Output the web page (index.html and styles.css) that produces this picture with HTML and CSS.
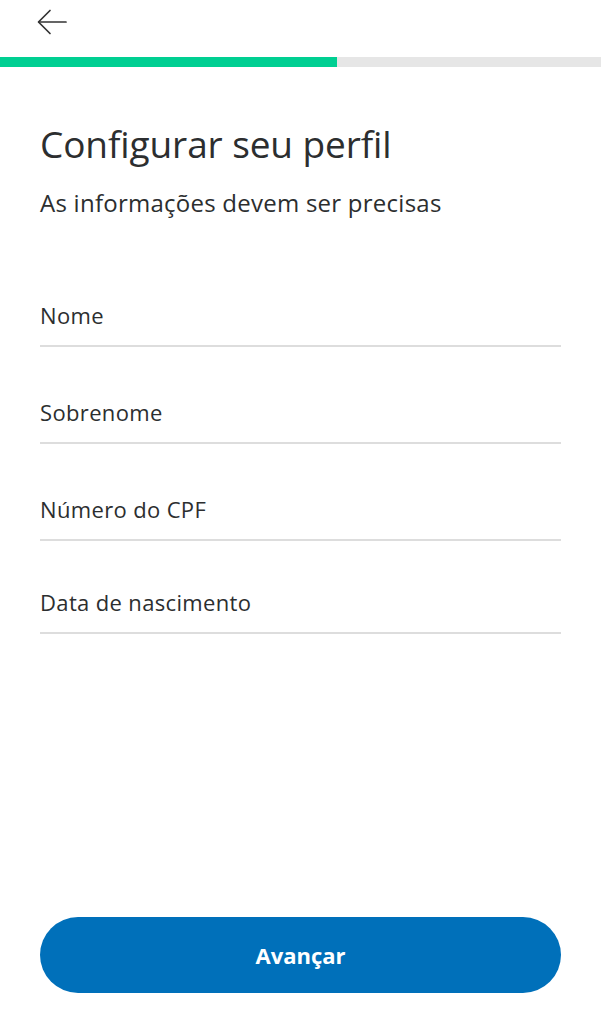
FILE: index.html
```html
<!DOCTYPE html>
<html lang="pt-BR">
<head>
<meta charset="utf-8">
<title>Configurar seu perfil</title>
<link rel="stylesheet" href="styles.css">
</head>
<body>
<div class="page">
  <header class="topbar">
    <button class="back" aria-label="Voltar">
      <svg width="30" height="26" viewBox="0 0 30 26" fill="none" stroke="#333" stroke-width="1.7" stroke-linecap="round" stroke-linejoin="round">
        <path d="M29 13H2"/>
        <path d="M13 1.5L1.5 13L13 24.5"/>
      </svg>
    </button>
  </header>
  <div class="progress"><div class="progress-fill"></div></div>
  <main class="content">
    <h1 class="title">Configurar seu perfil</h1>
    <p class="subtitle">As informações devem ser precisas</p>
    <form class="fields">
      <div class="field"><span class="label">Nome</span></div>
      <div class="field"><span class="label">Sobrenome</span></div>
      <div class="field"><span class="label">Número do CPF</span></div>
      <div class="field"><span class="label">Data de nascimento</span></div>
    </form>
  </main>
  <footer class="actions">
    <button class="primary">Avançar</button>
  </footer>
</div>
</body>
</html>
```

FILE: styles.css
```css
html, body {
  margin: 0;
  padding: 0;
  background: #ffffff;
}
body {
  font-family: "Open Sans", "Noto Sans", sans-serif;
  color: #2c2e2f;
}
.page {
  height: 1024px;
  display: flex;
  flex-direction: column;
}
.topbar {
  height: 57px;
  display: flex;
  align-items: center;
  padding-left: 37px;
  box-sizing: border-box;
  padding-bottom: 14px;
}
.back {
  border: 0;
  background: none;
  padding: 0;
  margin: 0;
  display: flex;
}
.progress {
  height: 10px;
  background: #e6e6e6;
}
.progress-fill {
  width: 337px;
  height: 100%;
  background: #00cf92;
}
.content {
  padding: 0 40px;
}
.title {
  margin: 55px 0 0;
  font-size: 37px;
  font-weight: 400;
  line-height: 44px;
  letter-spacing: -0.1px;
}
.subtitle {
  margin: 22px 0 0;
  font-size: 24px;
  line-height: 30px;
  letter-spacing: 0.25px;
}
.fields {
  margin-top: 83px;
  display: flex;
  flex-direction: column;
}
.field {
  height: 97px;
  border-bottom: 2px solid #dddddd;
  box-sizing: border-box;
  display: flex;
  align-items: flex-end;
  padding-bottom: 16px;
}
.field:first-child {
  height: auto;
}
.field:last-child {
  height: 93px;
}
.label {
  font-size: 22px;
  line-height: 28px;
  letter-spacing: 0.35px;
}
.actions {
  margin-top: auto;
  padding: 0 40px 31px;
}
.primary {
  width: 100%;
  height: 76px;
  border: 0;
  border-radius: 38px;
  background: #0070ba;
  color: #ffffff;
  font-family: "Open Sans", "Noto Sans", sans-serif;
  font-size: 22px;
  font-weight: 700;
}
```
